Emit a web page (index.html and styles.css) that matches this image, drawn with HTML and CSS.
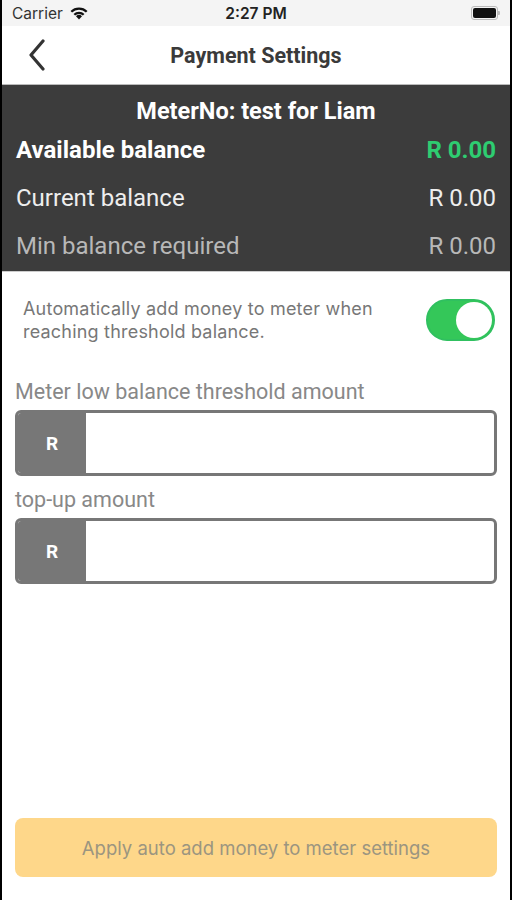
FILE: index.html
```html
<!DOCTYPE html>
<html lang="en">
<head>
    <meta charset="UTF-8">
    <meta name="viewport" content="width=device-width, initial-scale=1.0">
    <title>Payment Settings</title>
    <link rel="stylesheet" href="styles.css">
</head>
<body>
    <div class="phone">
        <div class="status-bar">
            <div class="status-left">
                <span>Carrier</span>
                <svg class="wifi" width="20" height="14" viewBox="0 0 18 13">
                    <path d="M9 12.5 L6.2 9.6 A4 4 0 0 1 11.8 9.6 Z" fill="#111"/>
                    <path d="M3.9 7.4 A7.3 7.3 0 0 1 14.1 7.4 L12.6 8.9 A5.2 5.2 0 0 0 5.4 8.9 Z" fill="#111"/>
                    <path d="M1.1 4.6 A11.3 11.3 0 0 1 16.9 4.6 L15.4 6.1 A9.2 9.2 0 0 0 2.6 6.1 Z" fill="#111"/>
                </svg>
            </div>
            <div class="status-time">2:27 PM</div>
            <div class="status-right">
                <div class="battery"><div class="battery-fill"></div></div>
                <div class="battery-tip"></div>
            </div>
        </div>

        <div class="nav-bar">
            <svg class="back" width="18" height="32" viewBox="0 0 18 32">
                <path d="M15 2 L3 16 L15 30" fill="none" stroke="#333" stroke-width="3.2" stroke-linecap="round" stroke-linejoin="round"/>
            </svg>
            <h1 class="nav-title">Payment Settings</h1>
        </div>

        <div class="balance-panel">
            <div class="meter-name">MeterNo: test for Liam</div>
            <div class="balance-row available">
                <span>Available balance</span>
                <span class="amount-green">R 0.00</span>
            </div>
            <div class="balance-row current">
                <span>Current balance</span>
                <span>R 0.00</span>
            </div>
            <div class="balance-row minimum">
                <span>Min balance required</span>
                <span>R 0.00</span>
            </div>
        </div>

        <div class="settings">
            <div class="auto-row">
                <p class="auto-text">Automatically add money to meter when reaching threshold balance.</p>
                <div class="toggle"><div class="toggle-knob"></div></div>
            </div>

            <label class="field-label">Meter low balance threshold amount</label>
            <div class="amount-input">
                <div class="currency">R</div>
                <div class="input-area"></div>
            </div>

            <label class="field-label">top-up amount</label>
            <div class="amount-input">
                <div class="currency">R</div>
                <div class="input-area"></div>
            </div>
        </div>

        <div class="footer">
            <button class="apply-btn">Apply auto add money to meter settings</button>
        </div>
    </div>
</body>
</html>
```

FILE: styles.css
```css
body {
    margin: 0;
    padding: 0;
    background-color: #000;
    font-family: Roboto, "Liberation Sans", Arial, sans-serif;
}
.phone {
    width: 508px;
    height: 900px;
    margin: 0 2px;
    background-color: #fff;
    display: flex;
    flex-direction: column;
    overflow: hidden;
}
.status-bar {
    height: 26px;
    background-color: #f4f4f4;
    display: flex;
    align-items: center;
    justify-content: space-between;
    padding: 0 10px;
    font-family: Inter, "Liberation Sans", Arial, sans-serif;
    font-size: 15.5px;
    color: #333;
}
.status-left {
    display: flex;
    align-items: center;
    gap: 6px;
    width: 120px;
}
.wifi {
    margin-top: -1px;
}
.status-time {
    font-weight: 600;
    color: #222;
}
.status-right {
    width: 120px;
    display: flex;
    justify-content: flex-end;
    align-items: center;
}
.battery {
    width: 23px;
    height: 10px;
    border: 1px solid #bbb;
    border-radius: 3px;
    padding: 1px;
}
.battery-fill {
    width: 100%;
    height: 100%;
    background-color: #111;
    border-radius: 2px;
}
.battery-tip {
    width: 2px;
    height: 4px;
    background-color: #bbb;
    border-radius: 0 1px 1px 0;
}
.nav-bar {
    height: 58px;
    position: relative;
    display: flex;
    align-items: center;
    justify-content: center;
    border-bottom: 1px solid #bbb;
}
.back {
    position: absolute;
    left: 26px;
    top: 13px;
}
.nav-title {
    margin: 0;
    font-size: 21.5px;
    font-weight: 700;
    color: #3a3a3a;
}
.balance-panel {
    background-color: #3c3c3c;
    padding: 11px 14px 0 14px;
    height: 175px;
    border-bottom: 1px solid #ccc;
}
.meter-name {
    text-align: center;
    color: #fff;
    font-size: 23.5px;
    font-weight: 700;
    line-height: 30px;
}
.balance-row {
    display: flex;
    justify-content: space-between;
    align-items: center;
    font-size: 24px;
    height: 48px;
}
.balance-row.available {
    color: #fff;
    font-weight: 700;
}
.balance-row.current {
    color: #eee;
}
.balance-row.minimum {
    color: #b8b8b8;
}
.amount-green {
    color: #2ecc71;
}
.settings {
    padding: 0 13px;
}
.auto-row {
    display: flex;
    align-items: center;
    justify-content: space-between;
    padding: 25px 2px 0 8px;
}
.auto-text {
    margin: 0;
    width: 380px;
    font-family: Inter, "Liberation Sans", Arial, sans-serif;
    font-size: 18px;
    letter-spacing: 0.2px;
    line-height: 23px;
    color: #777;
}
.toggle {
    width: 69px;
    height: 42px;
    box-sizing: border-box;
    border-radius: 21px;
    background-color: #34c759;
    border: 2px solid #30c060;
    display: flex;
    align-items: center;
    justify-content: flex-end;
    padding: 0 1px;
}
.toggle-knob {
    width: 36px;
    height: 36px;
    border-radius: 50%;
    background-color: #fff;
}
.field-label {
    display: block;
    margin-top: 36px;
    font-size: 21.5px;
    color: #888;
    line-height: 26px;
}
.amount-input + .field-label {
    margin-top: 11px;
}
.amount-input {
    margin-top: 5px;
    height: 66px;
    box-sizing: border-box;
    border: 3px solid #777;
    border-radius: 6px;
    display: flex;
    overflow: hidden;
}
.currency {
    width: 68px;
    background-color: #777;
    color: #fff;
    font-weight: bold;
    font-size: 19px;
    display: flex;
    align-items: center;
    justify-content: center;
}
.input-area {
    flex: 1;
}
.footer {
    margin-top: auto;
    padding: 0 13px 23px 13px;
}
.apply-btn {
    width: 100%;
    height: 59px;
    border: none;
    border-radius: 8px;
    background-color: #fed78a;
    color: #9b9580;
    font-family: Inter, "Liberation Sans", Arial, sans-serif;
    font-size: 18.5px;
}
```
